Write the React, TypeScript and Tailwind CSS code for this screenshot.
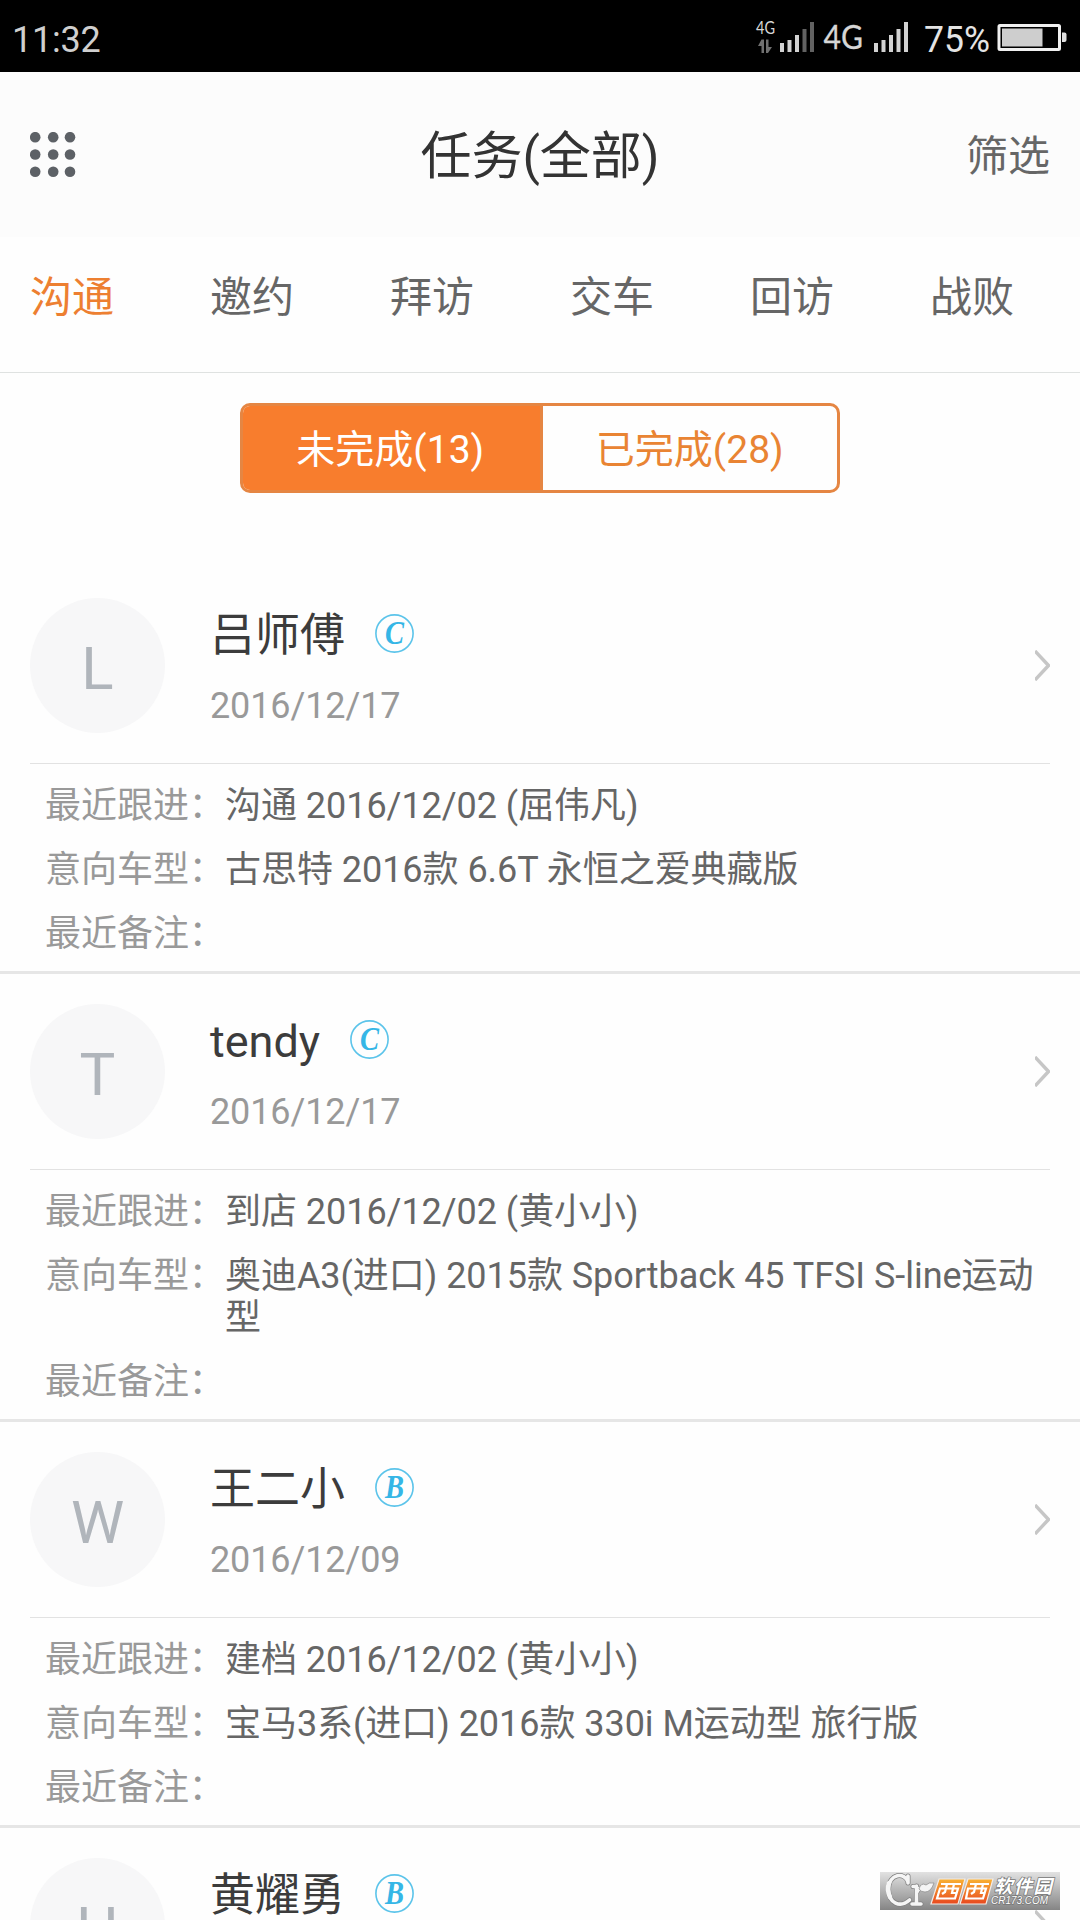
type Task = {
  initial: string;
  name: string;
  level: string;
  date: string;
  follow: string;
  model: string;
};

const tabs = ['沟通', '邀约', '拜访', '交车', '回访', '战败'];

const tasks: Task[] = [
  { initial: 'L', name: '吕师傅', level: 'C', date: '2016/12/17', follow: '沟通 2016/12/02 (屈伟凡)', model: '古思特 2016款 6.6T 永恒之爱典藏版' },
  { initial: 'T', name: 'tendy', level: 'C', date: '2016/12/17', follow: '到店 2016/12/02 (黄小小)', model: '奥迪A3(进口) 2015款 Sportback 45 TFSI S-line运动型' },
  { initial: 'W', name: '王二小', level: 'B', date: '2016/12/09', follow: '建档 2016/12/02 (黄小小)', model: '宝马3系(进口) 2016款 330i M运动型 旅行版' },
];

function StatusBar() {
  return (
    <div className="flex h-[72px] shrink-0 items-center justify-between bg-black pl-3 text-[#cfcfcf]">
      <span className="pt-[8px] text-[36px] leading-[42px] tracking-[-0.2px]">11:32</span>
      <svg width="340" height="72" viewBox="0 0 340 72" className="shrink-0">
        <text x="16" y="34" fontSize="16.5" fontFamily="Lato" fill="#d6d6d6" textLength="19" lengthAdjust="spacingAndGlyphs">4G</text>
        <g fill="#707070">
          <path d="M21.500 39.500h2.500V53h-2.500V46h-3.500z" />
          <path d="M26 39.500h2.500V47h3.500L28 53h-2z" />
        </g>
        <g fill="#d2d2d2">
          <rect x="40" y="43" width="4" height="9" />
          <rect x="47.5" y="40" width="4" height="12" />
          <rect x="55" y="35" width="4" height="17" />
        </g>
        <g fill="#626262">
          <rect x="62.5" y="29" width="4" height="23" />
          <rect x="70" y="22" width="4" height="30" />
        </g>
        <text x="83.500" y="49" fontSize="33" fontFamily="Lato" fill="#d6d6d6" stroke="#d6d6d6" strokeWidth=".3" textLength="39.500" lengthAdjust="spacingAndGlyphs">4G</text>
        <g fill="#d2d2d2">
          <rect x="134" y="43" width="4" height="9" />
          <rect x="141.5" y="40" width="4" height="12" />
          <rect x="149" y="35" width="4" height="17" />
          <rect x="156.500" y="29" width="4" height="23" />
          <rect x="164" y="22" width="4" height="30" />
        </g>
        <text x="184" y="52" fontSize="36.500" fontFamily="Roboto" fill="#e4e4e4" textLength="66" lengthAdjust="spacingAndGlyphs">75%</text>
        <rect x="259" y="25.500" width="60.500" height="24" rx="1" fill="none" stroke="#f0f0f0" strokeWidth="3" />
        <rect x="262" y="28.500" width="40.500" height="18" fill="#cecece" />
        <path d="M322 32.500h2.500q2 0 2 2v5.500q0 2-2 2H322z" fill="#e0e0e0" />
      </svg>
    </div>
  );
}

function Header() {
  return (
    <header className="grid h-[165px] shrink-0 grid-cols-3 items-center bg-[#fcfcfc] px-[30px]">
      <svg width="46" height="46" viewBox="0 0 46 46" fill="#5d6166">
        {[5.2, 22.500, 39.800].map((cy) =>
          [5.2, 23.2, 40].map((cx) => <circle key={`${cx}-${cy}`} cx={cx} cy={cy} r="5.300" />)
        )}
      </svg>
      <h1 className="pt-[4px] text-center text-[51px] leading-[60px] text-[#333]">任务(全部)</h1>
      <span className="pt-[5px] text-right text-[42px] leading-[50px] text-[#666]">筛选</span>
    </header>
  );
}

function Chevron() {
  return (
    <svg width="15" height="31" viewBox="0 0 15 31" fill="none" stroke="#c6c6c6" strokeWidth="3.400">
      <path d="M0 1L13.500 15.500L0 30" />
    </svg>
  );
}

function DetailLine({ label, value }: { label: string; value: string }) {
  return (
    <div className="flex min-h-[42px] text-[36px] leading-[42px] tracking-[-0.04px]">
      <span className="w-[180px] shrink-0 whitespace-nowrap text-[#999]">{label}：</span>
      <span className="text-[#666]">{value}</span>
    </div>
  );
}

function LevelBadge({ level }: { level: string }) {
  return (
    <svg width="39" height="39" viewBox="0 0 39 39" className="mb-[6px]">
      <circle cx="19.500" cy="19.500" r="18.600" fill="none" stroke="#5cc4ea" strokeWidth="1.600" />
      <text x="10" y="30" fontSize="33" fontFamily="Liberation Serif" fontStyle="italic" fontWeight="bold" fill="#35b6e6" textLength="19" lengthAdjust="spacingAndGlyphs">
        {level}
      </text>
    </svg>
  );
}

function Avatar({ initial }: { initial: string }) {
  return (
    <div className="flex size-[135px] shrink-0 items-center justify-center rounded-full bg-[#f7f7f8] pt-[6px] text-[60px] leading-none text-[#b0b5bb]">
      {initial}
    </div>
  );
}

function NameLine({ name, level }: { name: string; level: string }) {
  return (
    <div className="flex h-[76px] items-center gap-[30px] text-[45px] leading-[54px] text-[#3c3c3c]">
      <span>{name}</span>
      <LevelBadge level={level} />
    </div>
  );
}

function TaskCard({ task }: { task: Task }) {
  return (
    <section className="shrink-0 border-b-[3px] border-[#e6e6e6]">
      <div className="mx-[30px] flex items-center border-b border-[#e2e2e2] py-[30px]">
        <Avatar initial={task.initial} />
        <div className="ml-[45px] flex h-[135px] flex-1 flex-col">
          <NameLine name={task.name} level={task.level} />
          <span className="mt-[11px] text-[36px] leading-[42px] tracking-[-0.12px] text-[#999]">{task.date}</span>
        </div>
        <Chevron />
      </div>
      <div className="flex flex-col gap-[22px] pt-[21px] pr-[30px] pb-[16px] pl-[45px]">
        <DetailLine label="最近跟进" value={task.follow} />
        <DetailLine label="意向车型" value={task.model} />
        <DetailLine label="最近备注" value="" />
      </div>
    </section>
  );
}

function PartialCard() {
  return (
    <section className="flex h-[92px] shrink-0 overflow-hidden px-[30px] pt-[30px]">
      <Avatar initial="H" />
      <div className="ml-[45px] flex-1">
        <NameLine name="黄耀勇" level="B" />
      </div>
      <div className="pt-[52px]">
        <Chevron />
      </div>
    </section>
  );
}

function Watermark() {
  return (
    <svg className="absolute top-[1872px] left-[880px]" width="180" height="38" viewBox="0 0 180 38">
      <defs>
        <linearGradient id="plate" x1="0" y1="0" x2="0" y2="1">
          <stop offset="0" stopColor="#e2e2e2" />
          <stop offset="1" stopColor="#858585" />
        </linearGradient>
        <linearGradient id="tile" x1="0" y1="0" x2="0" y2="1">
          <stop offset="0" stopColor="#f9b233" />
          <stop offset="1" stopColor="#e8481f" />
        </linearGradient>
      </defs>
      <rect width="180" height="38" fill="url(#plate)" />
      <g fill="none" strokeLinecap="round">
        <path d="M28 10C25 0 9 1 8.500 17c0 15 12 19 21 11M28 4v7M36.500 14v18M33 14.500h3.500M32 32h9M37 20q1-3 4-4" stroke="#808080" strokeWidth="5" />
        <path d="M28 10C25 0 9 1 8.500 17c0 15 12 19 21 11M28 4v7M36.500 14v18M33 14.500h3.500M32 32h9M37 20q1-3 4-4" stroke="#f5f5f5" strokeWidth="3.600" />
        <path d="M9 11Q6.500 18 10 25" stroke="#f5f5f5" strokeWidth="4.500" />
      </g>
      <path d="M39 17q2-7 7-4q3-3 8-2q-3 9-9 9q-4 0-6-3z" fill="#f5f5f5" stroke="#888" strokeWidth=".7" />
      <path d="M59 7h26l-7 25H51z" fill="url(#tile)" stroke="#f4ece6" strokeWidth="1.200" />
      <path d="M88 7h25l-7 25H80z" fill="url(#tile)" stroke="#f4ece6" strokeWidth="1.200" />
      <g fill="none" stroke="#fff" strokeWidth="2.200">
        <path d="M61 12h20M60 16.500h18l-3 10H57zM67 12l-2 8l-3 2M74 12l-2 9h4" />
        <path d="M90 12h19M88 16.500h18l-3 10H86zM96 12l-2 8l-3 2M103 12l-2 9h4" />
      </g>
      <g fill="#fff" stroke="#777" strokeWidth="1.500" paintOrder="stroke" fontStyle="italic" fontWeight="bold">
        <text x="114" y="20.500" fontSize="18.500" fontFamily="Noto Sans CJK SC" textLength="58">软件园</text>
        <text x="111" y="31.500" fontSize="10.500" fontWeight="normal" fontFamily="Liberation Sans" textLength="57" lengthAdjust="spacingAndGlyphs">CR173.COM</text>
      </g>
    </svg>
  );
}

export default function App() {
  return (
    <div lang="zh-CN" className="relative flex h-[1920px] w-[1080px] flex-col overflow-hidden bg-[#fefefe] font-[Roboto,'Noto_Sans_CJK_SC',sans-serif]">
      <StatusBar />
      <Header />
      <nav className="grid h-[136px] shrink-0 grid-cols-6 border-b border-[#dfe2e1] pt-[36px] text-[42px] leading-[50px] text-[#666]">
        {tabs.map((tab, i) => (
          <span key={tab} className={i === 0 ? 'pl-[30px] text-[#ed7f31]' : 'pl-[30px]'}>{tab}</span>
        ))}
      </nav>
      <div className="mx-auto mt-[30px] mb-[75px] flex h-[90px] w-[600px] shrink-0 overflow-hidden rounded-[10px] border-[3px] border-[#e58643] text-[39px] leading-[46px]">
        <button className="flex-1 bg-[#f87d2d] pt-[3px] pr-[2px] text-white">未完成(13)</button>
        <button className="flex-1 border-l-[3px] border-[#e58643] pt-[3px] text-[#e98433]">已完成(28)</button>
      </div>
      {tasks.map((task) => (
        <TaskCard key={task.name} task={task} />
      ))}
      <PartialCard />
      <Watermark />
    </div>
  );
}
